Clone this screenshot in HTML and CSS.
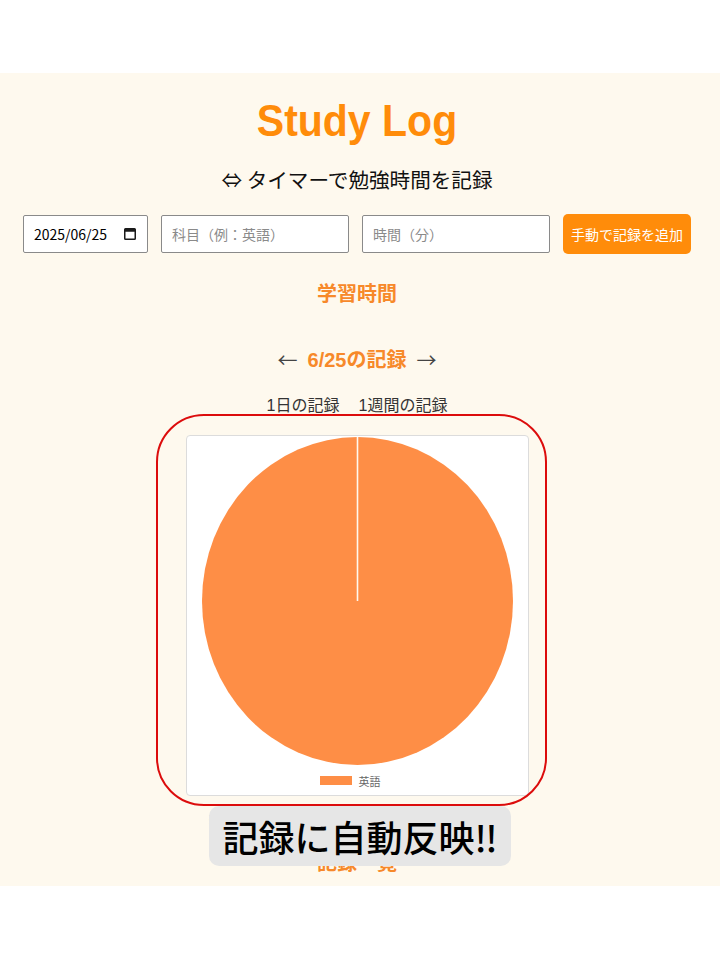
FILE: index.html
```html
<!DOCTYPE html>
<html lang="ja">
<head>
<meta charset="utf-8">
<title>Study Log</title>
<link rel="stylesheet" href="styles.css">
</head>
<body>
<div class="page">
  <main class="app">
    <h1 class="title">Study Log</h1>
    <p class="subtitle">⇔ タイマーで勉強時間を記録</p>
    <form class="entry">
      <div class="date-wrap">
        <input class="field date" type="text" value="2025/06/25" aria-label="日付">
        <svg class="cal" width="12" height="12" viewBox="0 0 12 12" aria-hidden="true">
          <rect x="0.75" y="0.75" width="10.5" height="10.5" rx="0.8" fill="none" stroke="#1a1a1a" stroke-width="1.5"/>
          <rect x="0.75" y="0.75" width="10.5" height="3" fill="#1a1a1a"/>
        </svg>
      </div>
      <input class="field text" type="text" placeholder="科目（例：英語）">
      <input class="field text" type="text" placeholder="時間（分）">
      <button class="add" type="button">手動で記録を追加</button>
    </form>
    <h2 class="section">学習時間</h2>
    <div class="daynav">
      <span class="arrow">←</span>
      <span class="day">6/25の記録</span>
      <span class="arrow">→</span>
    </div>
    <div class="tabs">
      <button class="tab" type="button">1日の記録</button>
      <button class="tab" type="button">1週間の記録</button>
    </div>
    <div class="card">
      <svg class="pie" width="341" height="330" viewBox="0 0 341 330">
        <ellipse cx="170.5" cy="165" rx="155.5" ry="164" fill="#fe8e46"/>
        <line x1="170.5" y1="1" x2="170.5" y2="165" stroke="#fff8ee" stroke-width="1.6"/>
      </svg>
      <div class="legend">
        <span class="swatch"></span>
        <span class="legend-label">英語</span>
      </div>
    </div>
    <p class="note">※タイマーで計測した時間は自動でグラフに反映されます</p>
    <h2 class="section list-title">記録一覧</h2>

    <div class="ring"></div>
    <div class="callout">記録に自動反映‼</div>
  </main>
</div>
</body>
</html>
```

FILE: styles.css
```css
html, body {
  margin: 0;
  padding: 0;
  background: #ffffff;
}

body {
  font-family: "Liberation Sans", "Noto Sans CJK JP", sans-serif;
  color: #222;
}

.page {
  padding-top: 73px;
}

.app {
  position: relative;
  height: 813px;
  overflow: hidden;
  background: #fef9ee;
  box-sizing: border-box;
  padding: 25px 6px 0 0;
  display: flex;
  flex-direction: column;
  align-items: center;
}

.title {
  margin: 0;
  font-family: "Liberation Sans", sans-serif;
  font-weight: 700;
  font-size: 41px;
  line-height: 47px;
  color: #ff8c0a;
  transform: scaleY(1.1);
}

.subtitle {
  margin: 20px 0 0;
  font-family: "Noto Sans CJK JP", "Liberation Sans", sans-serif;
  font-size: 20.6px;
  line-height: 28px;
  color: #111;
}

.entry {
  margin: 21px 0 0;
  display: flex;
  align-items: center;
  gap: 13px;
}

.date-wrap {
  position: relative;
  display: flex;
}

.cal {
  position: absolute;
  right: 12px;
  top: 13px;
  pointer-events: none;
}

.field {
  box-sizing: border-box;
  height: 38px;
  border: 1px solid #8a8a8a;
  border-radius: 2px;
  background: #fff;
  font-family: "Noto Sans CJK JP", sans-serif;
  font-size: 14px;
  color: #111;
  padding: 0 10px;
  margin: 0;
}

.field::placeholder {
  color: #8a8a8a;
}

.date {
  width: 125px;
  color: #000;
}

.text {
  width: 188px;
}

.add {
  box-sizing: border-box;
  height: 40px;
  padding: 0 8px;
  border: none;
  border-radius: 5px;
  background: #ff8c0a;
  color: #fff;
  font-family: "Noto Sans CJK JP", sans-serif;
  font-size: 14px;
  margin: 0;
}

.section {
  margin: 25px 0 0;
  font-family: "Noto Sans CJK JP", sans-serif;
  font-weight: 700;
  font-size: 20px;
  line-height: 28px;
  color: #f7892a;
}

.daynav {
  margin-top: 39px;
  display: flex;
  align-items: center;
  gap: 10px;
  font-size: 20px;
  line-height: 28px;
}

.arrow {
  color: #444;
  font-family: "Noto Sans CJK JP", sans-serif;
}

.day {
  font-weight: 700;
  color: #f7892a;
  font-family: "Liberation Sans", "Noto Sans CJK JP", sans-serif;
}

.tabs {
  margin-top: 21px;
  display: flex;
  gap: 19px;
}

.tab {
  border: none;
  background: transparent;
  padding: 0;
  margin: 0;
  font-family: "Liberation Sans", "Noto Sans CJK JP", sans-serif;
  font-size: 16px;
  line-height: 22px;
  color: #333;
}

.card {
  margin-top: 18px;
  width: 343px;
  box-sizing: border-box;
  background: #fff;
  border: 1px solid #dcdcdc;
  border-radius: 4px;
  display: flex;
  flex-direction: column;
}

.pie {
  display: block;
}

.legend {
  height: 29px;
  display: flex;
  align-items: center;
  justify-content: center;
  gap: 7px;
  padding-right: 14px;
}

.swatch {
  width: 32px;
  height: 9px;
  background: #fe8e46;
}

.legend-label {
  font-family: "Noto Sans CJK JP", sans-serif;
  font-size: 11px;
  color: #666;
}

.note {
  margin: 15px 0 0;
  font-family: "Noto Sans CJK JP", sans-serif;
  font-size: 11.5px;
  line-height: 16px;
  color: #777;
}

.list-title {
  margin-top: 21px;
}

.ring {
  position: absolute;
  left: 156px;
  top: 341px;
  width: 391px;
  height: 392px;
  box-sizing: border-box;
  border: 2px solid #dc0c0c;
  border-radius: 48px;
}

.callout {
  position: absolute;
  left: 209px;
  top: 733px;
  width: 302px;
  height: 60px;
  border-radius: 10px;
  background: #e6e6e6;
  display: flex;
  align-items: center;
  justify-content: center;
  font-family: "Noto Sans CJK JP", sans-serif;
  font-weight: 500;
  font-size: 36px;
  color: #000;
}
```
